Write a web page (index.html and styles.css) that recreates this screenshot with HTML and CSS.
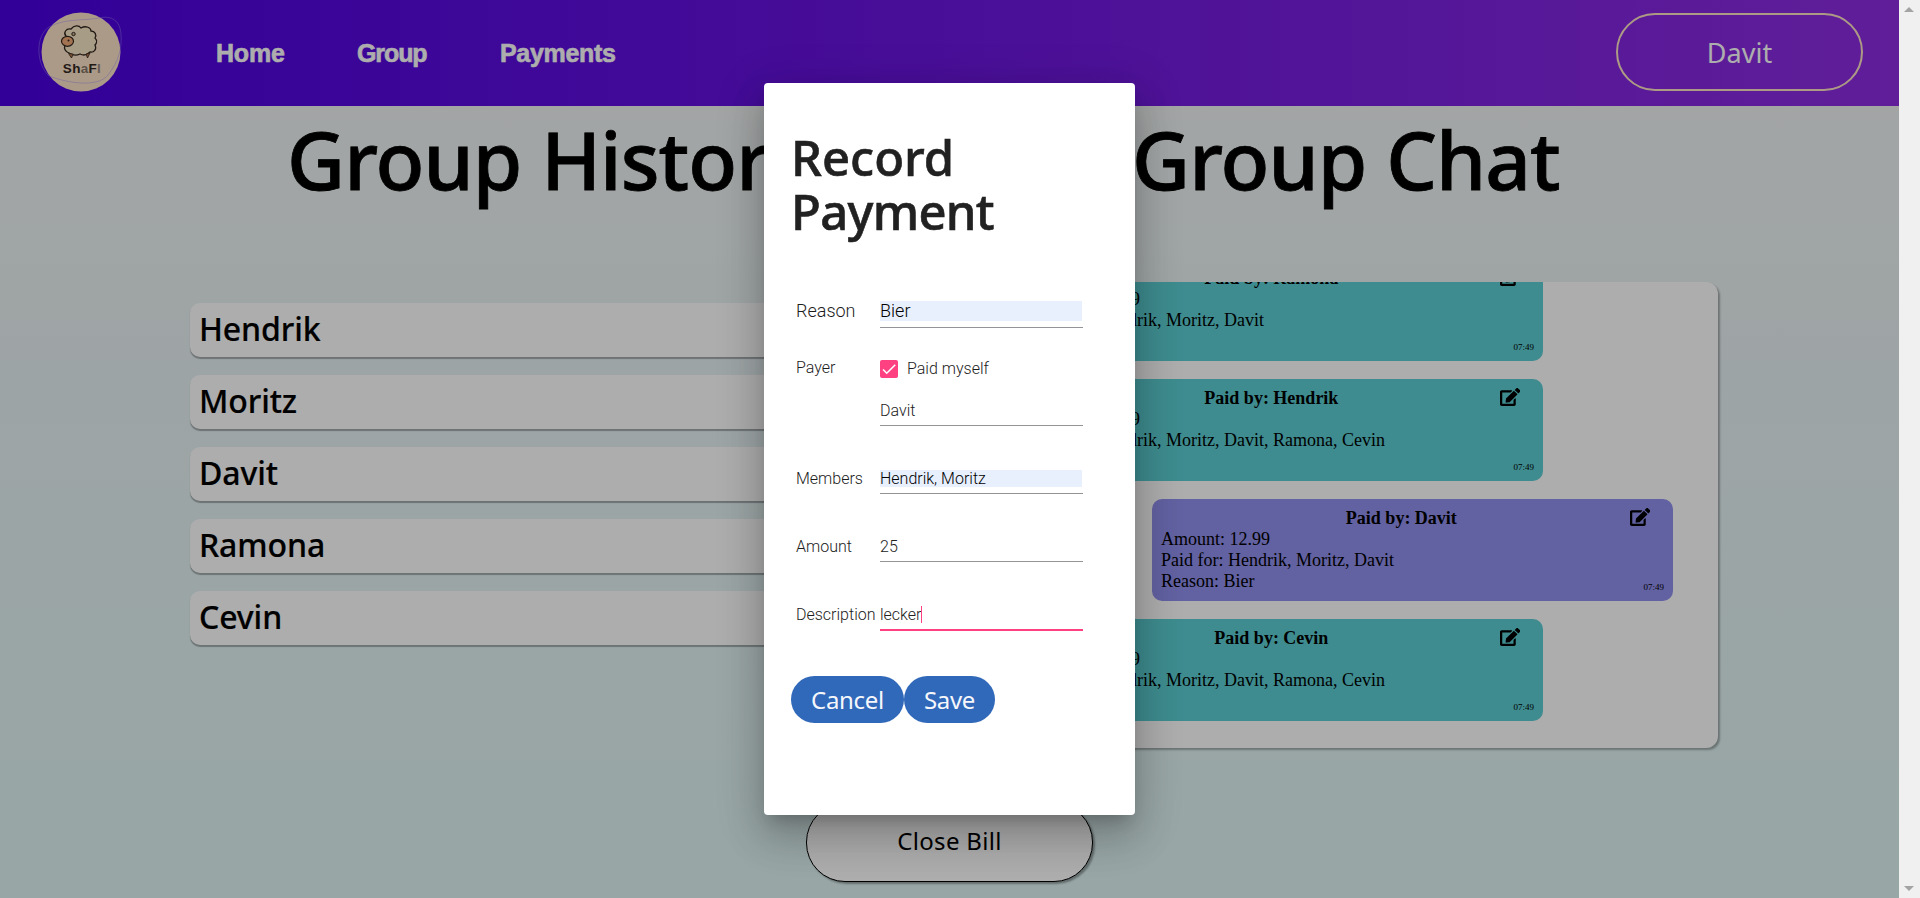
FILE: index.html
```html
<!DOCTYPE html>
<html lang="en">
<head>
<meta charset="utf-8">
<title>ShaFi</title>
<link rel="stylesheet" href="styles.css">
</head>
<body>
<svg width="0" height="0" class="defs">
  <symbol id="edit" viewBox="0 0 576 512"><path d="M402.600 83.200l90.200 90.200c3.800 3.800 3.800 10 0 13.800L274.400 405.600l-92.800 10.300c-12.400 1.400-22.900-9.100-21.500-21.500l10.300-92.800L388.800 83.200c3.800-3.800 10-3.800 13.800 0zm162-22.900l-48.800-48.800c-15.200-15.200-39.900-15.200-55.200 0l-35.400 35.400c-3.800 3.800-3.800 10 0 13.800l90.200 90.200c3.800 3.800 10 3.800 13.800 0l35.400-35.400c15.200-15.300 15.200-40 0-55.200zM384 346.200V448H64V128h229.800c3.200 0 6.200-1.300 8.500-3.500l40-40c7.600-7.600 2.200-20.500-8.500-20.500H48C21.500 64 0 85.500 0 112v352c0 26.500 21.500 48 48 48h352c26.500 0 48-21.500 48-48V306.200c0-10.700-12.900-16-20.500-8.500l-40 40c-2.200 2.300-3.500 5.300-3.500 8.500z"/></symbol>
</svg>
<div class="viewport">
  <div class="page">
    <header class="header">
      <svg class="logo" viewBox="0 0 120 106" width="120" height="106">
        <circle cx="61" cy="52" r="39.500" fill="#fee4ca"/>
        <path d="M29 76C16 64 15 36 29 27C45 18 64 21 79 18C92 15 100 21 101 34C102 48 99 61 88 75C78 88 47 83 29 76Z" fill="none" stroke="#a08cf0" stroke-width=".7" opacity=".65"/>
        <path d="M46 36C43 33 46 28 51 29C54 25 59 25 61 28C66 25 71 28 71 31C75 31 77 35 75 38C78 41 76 44 75 45C77 49 74 53 70 52C66 56 62 55 60 54C56 56 52 55 49 53C44 51 44 48 45 45Z" fill="#f6e6c4" stroke="#33281f" stroke-width="1.300"/>
        <path d="M48.500 53.500l3 4.500 1.800-4zM66 54l1.500 4 2.500-5z" fill="#b5764a" stroke="#33281f" stroke-width=".8"/>
        <ellipse cx="47.500" cy="41.300" rx="6" ry="5" fill="#f0a878" stroke="#33281f" stroke-width="1.200"/>
        <circle cx="53.500" cy="34" r="1.700" fill="#c9ad92" stroke="#33281f" stroke-width="1"/>
        <circle cx="48.500" cy="40.500" r="1" fill="#33281f"/>
        <text x="62" y="72.500" class="logo-text">Sh<tspan class="logo-mid">a</tspan>F<tspan class="logo-fade">I</tspan></text>
      </svg>
      <nav class="nav"><a class="n1">Home</a><a class="n2">Group</a><a class="n3">Payments</a></nav>
      <button class="user">Davit</button>
    </header>
    <main class="columns">
      <section>
        <h1 class="h-history">Group History</h1>
        <ul class="members"><li>Hendrik</li><li>Moritz</li><li>Davit</li><li>Ramona</li><li>Cevin</li></ul>
      </section>
      <section>
        <h1 class="h-chat">Group Chat</h1>
        <div class="chat">
          <article class="msg"><div class="top"><b>Paid by: Ramona</b><svg class="edit"><use href="#edit"/></svg></div><p>Amount: 12.99</p><p>Paid for: Hendrik, Moritz, Davit</p><div class="last"><p>Reason: Bier</p><time>07:49</time></div></article>
          <article class="msg"><div class="top"><b>Paid by: Hendrik</b><svg class="edit"><use href="#edit"/></svg></div><p>Amount: 12.99</p><p>Paid for: Hendrik, Moritz, Davit, Ramona, Cevin</p><div class="last"><p>Reason: Bier</p><time>07:49</time></div></article>
          <article class="msg own"><div class="top"><b>Paid by: Davit</b><svg class="edit"><use href="#edit"/></svg></div><p>Amount: 12.99</p><p>Paid for: Hendrik, Moritz, Davit</p><div class="last"><p>Reason: Bier</p><time>07:49</time></div></article>
          <article class="msg"><div class="top"><b>Paid by: Cevin</b><svg class="edit"><use href="#edit"/></svg></div><p>Amount: 12.99</p><p>Paid for: Hendrik, Moritz, Davit, Ramona, Cevin</p><div class="last"><p>Reason: Bier</p><time>07:49</time></div></article>
        </div>
      </section>
    </main>
    <button class="close-bill">Close Bill</button>
    <div class="backdrop">
      <div class="dialog">
        <h2><span class="w1">Record</span><br><span class="w2">Payment</span></h2>
        <div class="form">
          <div class="row big"><label>Reason</label><div class="field"><div class="input filled">Bier</div></div></div>
          <div class="row check"><label>Payer</label><div class="option"><span class="box"><svg viewBox="0 0 24 24" width="18" height="18"><path d="M4.100 12.700L9 17.600 20.300 6.300" fill="none" stroke="#fff" stroke-width="2.130"/></svg></span><span class="myself">Paid myself</span></div></div>
          <div class="row payer"><label></label><div class="field"><div class="input">Davit</div></div></div>
          <div class="row"><label>Members</label><div class="field"><div class="input filled">Hendrik, Moritz</div></div></div>
          <div class="row"><label>Amount</label><div class="field"><div class="input">25</div></div></div>
          <div class="row"><label>Description</label><div class="field focus"><div class="input">lecker<i class="caret"></i></div></div></div>
        </div>
        <div class="actions"><button class="cancel">Cancel</button><button class="save">Save</button></div>
      </div>
    </div>
  </div>
  <div class="scrollbar"><i class="up"></i><i class="down"></i></div>
</div>
</body>
</html>
```
FILE: styles.css
```css
* { box-sizing: border-box; }
body { margin: 0; overflow: hidden; }
h1, h2, p, ul { margin: 0; padding: 0; }
button { font: inherit; padding: 0; margin: 0; }
.defs { position: absolute; }
.viewport { display: flex; width: 1920px; height: 898px; }
.page { position: relative; width: 1899px; height: 898px; overflow: hidden; background: linear-gradient(#f3f5f3, #e8f2f4 42%, #e0f6f5); }
.header { display: flex; align-items: center; height: 106px; padding: 0 36px 2px 20px; background: linear-gradient(to right, #4a00e0, #8e2de2); color: #fff; }
.logo { margin-top: 2px; }
.logo-text { font: 700 13.500px "Liberation Sans", sans-serif; letter-spacing: .3px; fill: #33281f; text-anchor: middle; }
.logo-mid { fill: #85776a; }
.logo-fade { fill: #9a8b80; }
.nav { display: flex; gap: 73px; margin-left: 76px; font: 700 25px "Liberation Sans", sans-serif; -webkit-text-stroke: .6px #fff; padding-top: 2px; }
.nav a { white-space: nowrap; }
.n1 { width: 68px; letter-spacing: -.2px; }
.n2 { width: 70px; letter-spacing: -1.100px; }
.n3 { width: 116px; letter-spacing: -.3px; }
.user { width: 247px; height: 78px; margin-left: auto; padding-top: 1px; border: 2px solid #ffe4c4; border-radius: 39px; background: none; color: #fff; font: 400 27px "Noto Sans", sans-serif; }
.columns { display: grid; grid-template-columns: 732px 741px; gap: 55px; padding-left: 190px; height: 697px; }
h1, h2, .members { font-family: "Noto Sans", sans-serif; font-weight: 500; }
h1 { font-size: 80px; line-height: 106px; white-space: nowrap; color: #000; letter-spacing: -.950px; -webkit-text-stroke: .8px #000; }
.h-history { margin-left: 97px; }
.h-chat { margin-left: 155px; }
.members { list-style: none; margin-top: 91px; display: grid; gap: 18px; }
.members li { height: 54px; padding-left: 9px; line-height: 52px; font-size: 32px; background: #fff; border-radius: 10px; box-shadow: 0 2px 1px #0000004d; letter-spacing: -.1px; -webkit-text-stroke: .2px #000; }
.chat { display: flex; flex-direction: column; justify-content: flex-end; gap: 18px; height: 466px; margin-top: 70px; padding: 0 45px 27px; overflow: hidden; background: #fff; border-radius: 12px; box-shadow: 2px 2px 2px #0000004d; font: 18px/21px "Liberation Serif", serif; }
.msg { flex: none; width: 521px; height: 102px; padding: 9px; border-radius: 10px; background: #5ccfd3; }
.own { align-self: flex-end; background: #9190ee; }
.top { display: flex; height: 21px; }
.top b { flex: 1; padding-left: 12px; text-align: center; }
.edit { width: 20.250px; height: 18px; margin-right: 14px; flex: none; }
.last { display: flex; justify-content: space-between; }
.last time { font-size: 9px; line-height: 21px; padding-top: 6px; }
.close-bill { display: block; width: 287px; height: 79px; margin: 0 0 0 806px; border: 1px solid #000; border-radius: 39px; background: #fff; box-shadow: 2px 2px 2px #00000059; color: #000; font: 400 24px "Noto Sans", sans-serif; letter-spacing: .3px; padding-bottom: 4px; }
.backdrop { position: absolute; inset: 0; background: rgba(0, 0, 0, .32); }
.dialog { position: absolute; left: 764px; top: 83px; width: 371px; height: 732px; padding: 47px 27px; border-radius: 4px; background: #fff; box-shadow: 0 11px 15px -7px #0003, 0 24px 38px 3px #00000024, 0 9px 46px 8px #0000001f; }
h2 { font-size: 49px; line-height: 54px; color: #212121; -webkit-text-stroke: .6px #212121; }
.w1 { letter-spacing: 0; }
.w2 { letter-spacing: -.7px; }
.form { margin: 63px 0 0 5px; color: #1c1c1c; font: 300 16px/17px Roboto, sans-serif; }
.row { display: grid; grid-template-columns: 84px 203px; height: 25px; margin-bottom: 43px; white-space: nowrap; }
.field { height: 24px; border-bottom: 1px solid #949494; }
.input { display: flex; width: 202px; height: 17px; color: #222; }
.input.filled { background: #e8f0fe; color: #000; }
.big { height: 27px; margin-bottom: 31px; font-size: 18px; line-height: 20px; }
.big .field { height: 27px; }
.big .input { height: 20px; }
.check { height: 20px; margin-bottom: 23px; }
.option { display: flex; gap: 9px; padding-top: 1px; }
.box { width: 18px; height: 18px; border-radius: 2px; background: #ff4081; }
.box svg { display: block; }
.field.focus { height: 25px; border-bottom: 2px solid #ff4081; }
.caret { width: 1px; height: 17px; background: #ff4081; }
.actions { display: flex; padding-top: 2px; }
.actions button { height: 47px; border: 0; border-radius: 23.500px; background: #3068ba; color: #f5f7fb; font: 400 24px "Noto Sans", sans-serif; letter-spacing: -.3px; }
.cancel { width: 113px; }
.save { width: 91px; }
.scrollbar { display: flex; flex-direction: column; justify-content: space-between; align-items: center; width: 21px; padding: 7px 2px 7px 0; background: #f0f0f0; }
.up, .down { border: 5px solid transparent; }
.up { border-top: 0; border-bottom-color: #a3a3a3; }
.down { border-bottom: 0; border-top-color: #a3a3a3; }
```
